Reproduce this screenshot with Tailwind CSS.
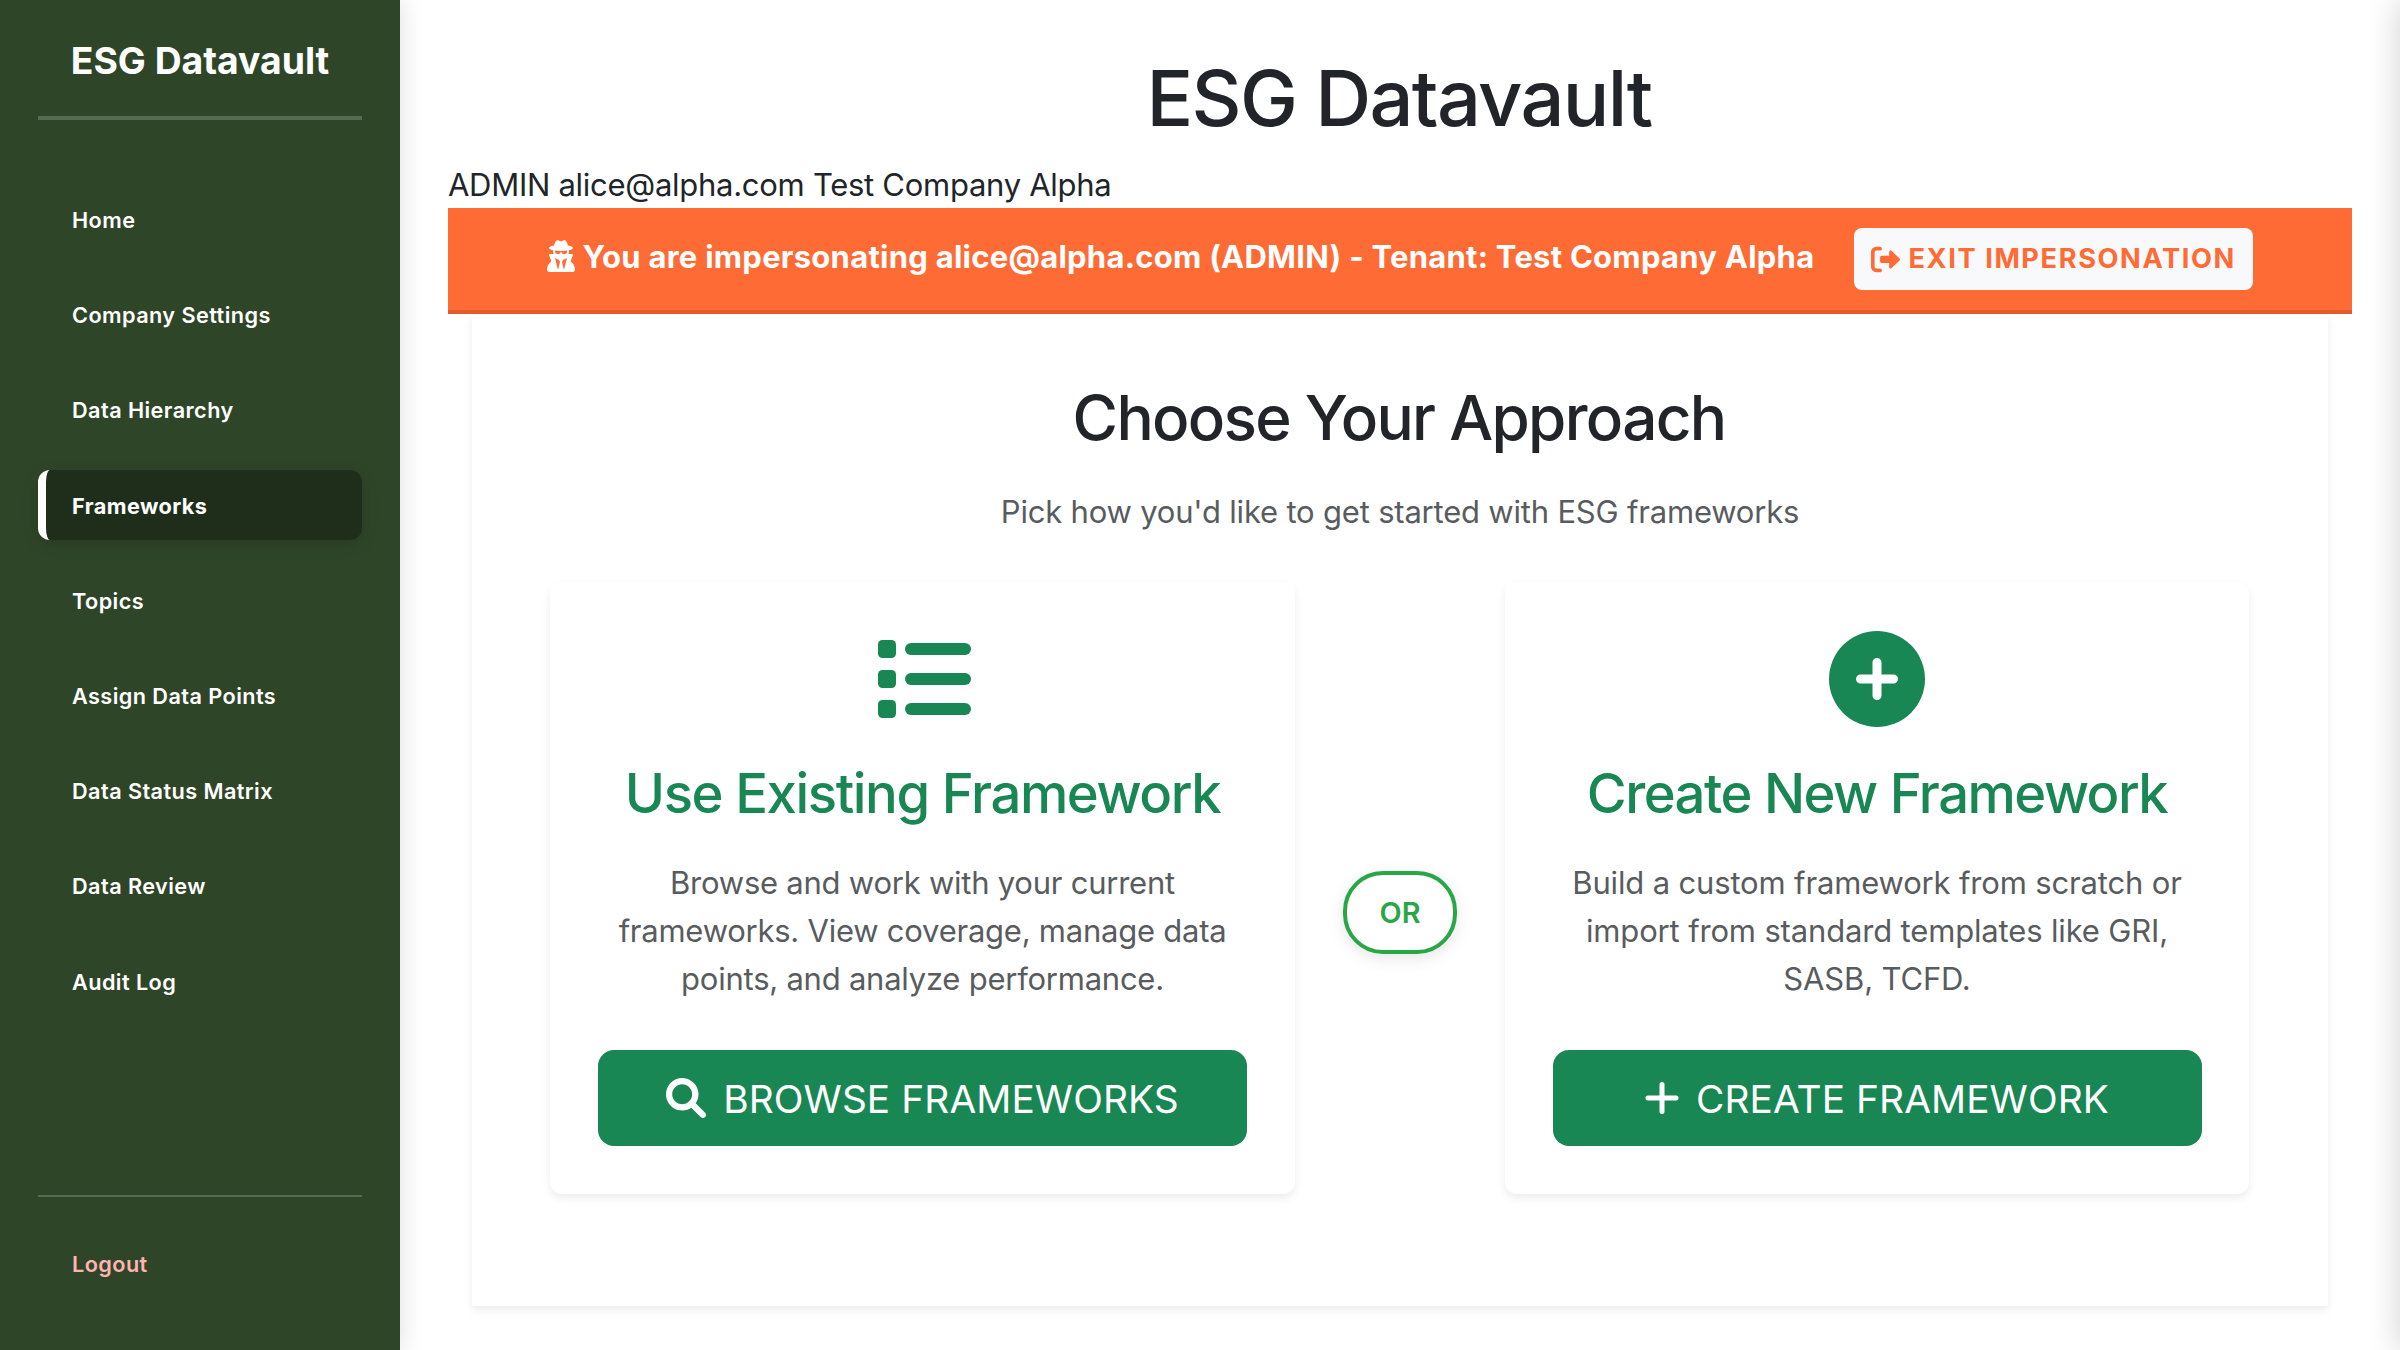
<!DOCTYPE html>
<html lang="en">
<head>
<meta charset="utf-8">
<title>ESG Datavault</title>
<script src="https://cdn.jsdelivr.net/npm/@tailwindcss/browser@4"></script>
</head>
<body class="w-[2400px] h-[1350px] overflow-hidden bg-white font-['Inter',sans-serif] text-[#212529] flex">
<aside class="relative w-[400px] h-[1350px] shrink-0 bg-[#2f4528] px-[38px] flex flex-col text-white shadow-[4px_0_20px_rgba(0,0,0,0.1)]">
  <div class="h-[120px] border-b-4 border-[#596a53] pt-[35px] text-center whitespace-nowrap text-[37.3px] leading-[52px] font-bold"><span>ESG Datavault</span></div>
  <nav class="mt-[64.5px] flex flex-col gap-[25.6px] text-[21.7px] font-semibold tracking-[0.42px]">
    <a class="h-[69.6px] pl-[34px] pt-0.5 flex items-center"><span>Home</span></a>
    <a class="h-[69.6px] pl-[34px] pt-0.5 flex items-center"><span>Company Settings</span></a>
    <a class="h-[69.6px] pl-[34px] pt-0.5 flex items-center"><span>Data Hierarchy</span></a>
    <a class="h-[69.6px] pl-[26px] pt-0.5 flex items-center border-l-8 border-white rounded-[12px] bg-[#1f2e1b] font-bold shadow-[0_4px_16px_rgba(0,0,0,0.15)]"><span>Frameworks</span></a>
    <a class="h-[69.6px] pl-[34px] pt-0.5 flex items-center"><span>Topics</span></a>
    <a class="h-[69.6px] pl-[34px] pt-0.5 flex items-center"><span>Assign Data Points</span></a>
    <a class="h-[69.6px] pl-[34px] pt-0.5 flex items-center"><span>Data Status Matrix</span></a>
    <a class="h-[69.6px] pl-[34px] pt-0.5 flex items-center"><span>Data Review</span></a>
    <a class="h-[69.6px] pl-[34px] pt-0.5 flex items-center"><span>Audit Log</span></a>
  </nav>
  <div class="mt-auto h-[155px] border-t-2 border-[#596a53] pt-8">
    <a class="h-[70px] pl-[34px] flex items-center text-[21.7px] font-semibold tracking-[0.42px] text-[#ffb3b3]"><span>Logout</span></a>
  </div>
</aside>
<main class="w-[2000px] px-12 pt-[48px] flex flex-col">
  <h1 class="h-[112px] text-center text-[77.5px] leading-[100px] font-medium tracking-[-1.65px] pr-[2px]"><span>ESG Datavault</span></h1>
  <p class="h-[48px] text-[31px] leading-[50px] tracking-[-0.28px]"><span>ADMIN alice@alpha.com Test Company Alpha</span></p>
  <div class="relative z-10 h-[106px] shrink-0 bg-[#ff6b35] border-b-4 border-[#e55a2b] text-white flex items-start justify-center pt-5">
    <svg class="w-[28px] h-[32px] mt-3 mr-[8px]" viewBox="0 0 448 512" fill="currentColor"><path d="M377.700 338.800l37.150-92.870C419 235.400 411.200 224 399.100 224h-57.480C348.500 209.200 352 193 352 176c0-4.117-.8359-8.057-1.217-12.080C390.700 155.100 416 142.300 416 128c0-16.080-31.750-30.280-80.310-38.990C323.800 45.150 304.900 0 277.400 0c-10.380 0-19.620 4.500-27.380 10.500c-15.250 11.880-36.750 11.880-52 0C190.300 4.500 181.100 0 170.700 0C143.200 0 124.400 45.160 112.500 88.980C63.830 97.680 32 111.900 32 128c0 14.340 25.310 27.130 65.220 35.920C96.840 167.900 96 171.900 96 176C96 193 99.470 209.200 105.500 224H48.020C36.700 224 28.960 235.400 33.160 245.900l37.150 92.870C27.870 370.400 0 420.400 0 477.300C0 496.500 15.520 512 34.660 512H413.300C432.500 512 448 496.500 448 477.300C448 420.400 420.100 370.400 377.700 338.800zM176 479.100L128 288l64 32l16 32L176 479.100zM271.100 479.100L240 352l16-32l64-32L271.100 479.100zM320 186C320 207 302.800 224 281.600 224h-12.330c-16.460 0-30.290-10.390-35.630-24.990C232.100 194.900 228.400 192 224 192S215.900 194.900 214.400 199C209 213.600 195.200 224 178.800 224h-12.330C145.200 224 128 207 128 185.100V169.500C156.300 173.600 188.100 176 224 176s67.740-2.383 96-6.473V186z"/></svg>
    <span class="text-[31px] leading-[48px] mt-[5px] font-bold tracking-[0.25px] whitespace-nowrap">You are impersonating alice@alpha.com (ADMIN) - Tenant: Test Company Alpha</span>
    <div class="ml-10 w-[399px] h-[62px] rounded-[8px] bg-[#f8f9fa] text-[#ff6b35] flex items-center pl-[17px] whitespace-nowrap">
      <svg class="w-[29px] h-[29px]" viewBox="0 0 512 512" fill="currentColor"><path d="M96 480h64C177.700 480 192 465.700 192 448S177.700 416 160 416H96c-17.670 0-32-14.330-32-32V128c0-17.670 14.330-32 32-32h64C177.700 96 192 81.670 192 64S177.700 32 160 32H96C42.980 32 0 74.980 0 128v256C0 437 42.980 480 96 480zM504.800 238.500l-144.100-136c-6.975-6.578-17.200-8.375-26-4.594c-8.803 3.797-14.510 12.470-14.510 22.050l-.0918 72l-128-.001c-17.690 0-32.020 14.330-32.020 32v64c0 17.670 14.340 32 32.020 32l128 .001l.0918 71.100c0 9.578 5.707 18.250 14.510 22.050c8.803 3.781 19.030 1.984 26-4.594l144.100-136C514.400 264.400 514.400 247.600 504.800 238.500z"/></svg>
      <span class="ml-[8px] text-[27.2px] leading-[42px] font-bold tracking-[1.6px]">EXIT IMPERSONATION</span>
    </div>
  </div>
  <section class="mx-6 h-[992px] shrink-0 bg-white shadow-[0_4px_8px_rgba(0,0,0,0.075)] px-[78px] pt-[64px]">
    <h2 class="h-[94px] text-center text-[62px] leading-[80px] font-medium tracking-[-1.7px] pr-[2px]"><span>Choose Your Approach</span></h2>
    <p class="h-[110px] text-center text-[31px] leading-[80px] tracking-[-0.2px] text-[#595c5f]"><span>Pick how you'd like to get started with ESG frameworks</span></p>
    <div class="flex items-center gap-12">
      <article class="w-[745px] h-[612px] rounded-[12px] shadow-[0_4px_8px_rgba(0,0,0,0.075)] px-12 pt-[49px] flex flex-col items-center">
        <svg class="w-24 h-24" viewBox="0 0 512 512" fill="#198754"><rect x="16" y="48" width="96" height="96" rx="24"/><rect x="16" y="208" width="96" height="96" rx="24"/><rect x="16" y="368" width="96" height="96" rx="24"/><rect x="160" y="64" width="352" height="64" rx="32"/><rect x="160" y="224" width="352" height="64" rx="32"/><rect x="160" y="384" width="352" height="64" rx="32"/></svg>
        <h3 class="mt-[33px] text-[54.4px] leading-[67px] font-medium tracking-[-1.4px] whitespace-nowrap text-[#198754]"><span>Use Existing Framework</span></h3>
        <p class="mt-[32px] text-center text-[31px] leading-[48px] tracking-[-0.24px] whitespace-nowrap text-[#595c5f]"><span>Browse and work with your current</span><br><span>frameworks. View coverage, manage data</span><br><span>points, and analyze performance.</span></p>
        <a class="mt-[47px] w-[649px] h-[96px] rounded-[16px] bg-[#198754] text-white flex items-center justify-center whitespace-nowrap">
          <svg class="w-10 h-10" viewBox="0 0 512 512" fill="currentColor"><path d="M500.300 443.700l-119.700-119.700c27.220-40.410 40.650-90.900 33.460-144.700C401.800 87.790 326.800 13.320 235.200 1.723C99.010-15.510-15.510 99.010 1.724 235.200c11.600 91.640 86.080 166.700 177.600 178.900c53.800 7.189 104.300-6.236 144.700-33.460l119.700 119.700c15.620 15.620 40.950 15.620 56.570 0C515.900 484.700 515.900 459.300 500.300 443.700zM79.100 208c0-70.580 57.420-128 128-128s128 57.420 128 128c0 70.580-57.420 128-128 128S79.100 278.600 79.100 208z"/></svg>
          <span class="ml-[17px] mt-0.5 text-[38.8px] leading-[60px] tracking-[0.1px]">BROWSE FRAMEWORKS</span>
        </a>
      </article>
      <div class="w-[114px] h-[83px] mt-[48px] rounded-[40px] border-4 border-[#28a745] bg-white text-[#28a745] shadow-[0_4px_16px_rgba(0,0,0,0.1)] flex items-center justify-center text-[28.8px] font-semibold"><span class="mt-0.5">OR</span></div>
      <article class="w-[744px] h-[612px] rounded-[12px] shadow-[0_4px_8px_rgba(0,0,0,0.075)] px-12 pt-[49px] flex flex-col items-center">
        <svg class="w-24 h-24" viewBox="0 0 512 512"><circle cx="256" cy="256" r="256" fill="#198754"/><path d="M256 168V344M168 256H344" stroke="#fff" stroke-width="48" stroke-linecap="round"/></svg>
        <h3 class="mt-[33px] text-[54.4px] leading-[67px] font-medium tracking-[-1.5px] whitespace-nowrap text-[#198754]"><span>Create New Framework</span></h3>
        <p class="mt-[32px] text-center text-[31px] leading-[48px] tracking-[-0.16px] whitespace-nowrap text-[#595c5f]"><span>Build a custom framework from scratch or</span><br><span>import from standard templates like GRI,</span><br><span>SASB, TCFD.</span></p>
        <a class="mt-[47px] w-[649px] h-[96px] rounded-[16px] bg-[#198754] text-white flex items-center justify-center whitespace-nowrap">
          <svg class="w-[34px] h-10" viewBox="0 0 34 40" fill="none" stroke="currentColor" stroke-width="5" stroke-linecap="round"><path d="M17 6.500V33.500M3 20H31"/></svg>
          <span class="ml-[17px] mt-0.5 text-[38.8px] leading-[60px] tracking-[0.1px]">CREATE FRAMEWORK</span>
        </a>
      </article>
    </div>
  </section>
</main>
<div class="absolute top-0 left-[2400px] w-10 h-[1350px] shadow-[-4px_0_30px_rgba(0,0,0,0.15)]"></div>
</body>
</html>
